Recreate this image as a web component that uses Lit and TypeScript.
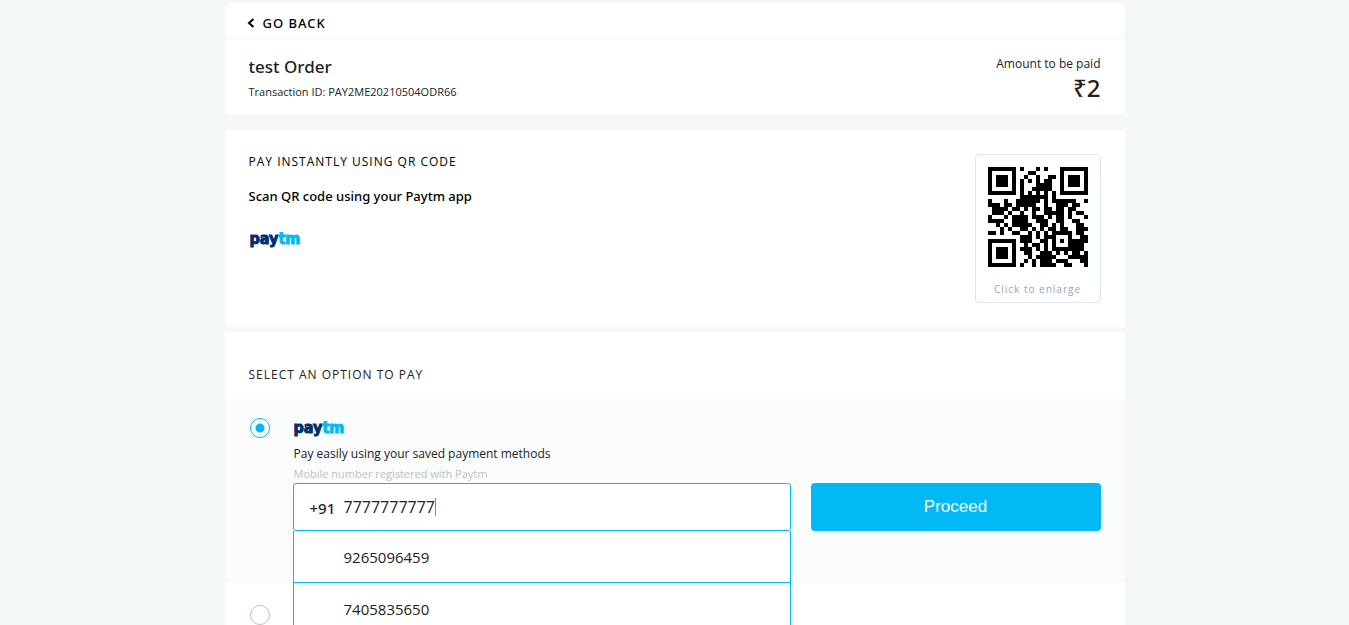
import { LitElement, html, css, svg } from "lit";
import { customElement, property, state } from "lit/decorators.js";

const QR_ROWS = [
  "#######.#...#.#...#######",
  "#.....#...##......#.....#",
  "#.###.#..#..#..##.#.###.#",
  "#.###.#.#.#.#.##..#.###.#",
  "#.###.#.#...####..#.###.#",
  "#.....#.#..#####..#.....#",
  "#######.#.#.#.#.#.#######",
  "........#######.#........",
  "#...#..######.#.######..#",
  "###.##.#####..#..###.##..",
  ".####.##.#.##.##.##.##...",
  ".###.#..#..#..#####.#.##.",
  "#...#.####.###.#.##.#...#",
  "####..####..###..##..##..",
  "..#.#.#####..##.#.#...##.",
  "...#.#..##.#.#.##.##..###",
  "##.#..##..#.#.#.#####.##.",
  "........###.#.###...#..##",
  "#######.###..##.#.#.#####",
  "#.....#..#.##.#.#...####.",
  "#.###.#.###.#.#.########.",
  "#.###.#..##..###.#.#.##.#",
  "#.###.#...#.#####...#####",
  "#.....#..#.#.###.###...##",
  "#######.#..#.####..##...#",
];

@customElement("qr-code")
class QrCode extends LitElement {
  static styles = css`
    :host { display: block; }
    .code { display: block; width: 100px; height: 100px; }
  `;
  render() {
    const d = QR_ROWS.map((row, y) =>
      [...row].map((c, x) => (c === "#" ? `M${x} ${y}h1v1h-1z` : "")).join("")
    ).join("");
    return html`<svg class="code" viewBox="0 0 25 25" shape-rendering="crispEdges" aria-hidden="true">
      ${svg`<path d=${d} fill="#000" />`}
    </svg>`;
  }
}

@customElement("paytm-logo")
class PaytmLogo extends LitElement {
  static styles = css`
    :host { display: block; }
    .logo {
      font: 700 16px/20px "DejaVu Sans Condensed", "DejaVu Sans", sans-serif;
      color: #002e6e;
      -webkit-text-stroke: 1px currentColor;
    }
    .light { color: #00b9f5; }
  `;
  render() {
    return html`<div class="logo">pay<span class="light">tm</span></div>`;
  }
}

@customElement("phone-field")
class PhoneField extends LitElement {
  @property() value = "7777777777";
  @property({ attribute: false }) suggestions = ["9265096459", "7405835650"];

  static styles = css`
    * { box-sizing: border-box; }
    :host { display: block; font-family: "Open Sans", "Noto Sans", sans-serif; color: #222; }
    .label { display: block; padding-left: 1px; font-size: 11px; line-height: 18px; color: #b8c2cb; }
    .wrap { position: relative; }
    .box {
      display: flex;
      align-items: center;
      height: 48px;
      padding: 0 16px;
      border: 1px solid #00b9f5;
      border-radius: 3px;
      background: #fff;
      cursor: text;
    }
    .prefix { width: 34px; font: 500 15px/22px "Noto Sans", sans-serif; padding-top: 2px; }
    .number {
      min-width: 1px;
      border: 0;
      outline: 0;
      padding: 0;
      background: none;
      color: inherit;
      caret-color: transparent;
      font: 400 16px/22px "Open Sans", "Noto Sans", sans-serif;
    }
    .caret { width: 1px; height: 18px; background: #00b9f5; }
    .menu {
      position: absolute;
      z-index: 1;
      top: 100%;
      left: 0;
      right: 0;
      margin: 0;
      padding: 0;
      list-style: none;
      border: 1px solid #00b9f5;
      border-top: 0;
      background: #fff;
    }
    .item + .item { border-top: 1px solid #00b9f5; }
    .choice {
      display: block;
      width: 100%;
      height: 51px;
      padding: 0 50px;
      border: 0;
      background: none;
      color: inherit;
      text-align: left;
      font: 400 15px/22px "Open Sans", "Noto Sans", sans-serif;
    }
  `;

  render() {
    return html`
      <label class="label" for="mobile">Mobile number registered with Paytm</label>
      <div class="wrap">
        <label class="box" for="mobile">
          <span class="prefix">+91</span>
          <input class="number" id="mobile" type="tel" autocomplete="off" .value=${this.value}
            style="width:${this.value.length}ch"
            @input=${(e: Event) => (this.value = (e.target as HTMLInputElement).value)} />
          <span class="caret"></span>
        </label>
        <ul class="menu">
          ${this.suggestions.map(
            (s) => html`<li class="item">
              <button class="choice" type="button" @click=${() => (this.value = s)}>${s}</button>
            </li>`
          )}
        </ul>
      </div>
    `;
  }
}

@customElement("app-root")
class AppRoot extends LitElement {
  @state() method = "paytm";

  static styles = css`
    * { box-sizing: border-box; }
    :host {
      display: block;
      min-height: 100vh;
      background: #f3f7f8;
      color: #222;
      font: 400 12px/18px "Open Sans", "Noto Sans", sans-serif;
    }
    .page { max-width: 900px; margin: 0 auto; padding-top: 3px; }
    .card { background: #fff; }
    .top { border-radius: 8px 8px 0 0; }
    .nav { display: flex; height: 36px; padding: 0 22px; align-items: center; border-bottom: 1px solid #f3f7f8; }
    .back {
      display: flex;
      align-items: center;
      gap: 8px;
      padding: 4px 0 0;
      border: 0;
      background: none;
      color: #000;
      font: 500 13px/18px "Noto Sans", sans-serif;
      letter-spacing: 1px;
    }
    .chevron { width: 8px; height: 10px; }
    .summary { display: flex; justify-content: space-between; padding: 16px 24px 11px; }
    .order { margin: 0 0 4px; font: 500 17px/24px "Noto Sans", sans-serif; }
    .txn { margin: 0; font-size: 11px; }
    .amount { text-align: right; }
    .value { font: 500 24px/30px "Noto Sans", sans-serif; }
    .qr { display: flex; justify-content: space-between; margin-top: 16px; padding: 24px; color: #000; }
    .heading { margin: 0; font-size: 12px; line-height: 16px; font-weight: 400; letter-spacing: 1px; }
    .scan { margin: 17px 0 24px; font: 500 13px/18px "Noto Sans", sans-serif; }
    .logo { padding-left: 1px; }
    .enlarge {
      display: flex;
      flex-direction: column;
      align-items: center;
      gap: 13px;
      width: 126px;
      height: 149px;
      padding: 12px 0 0;
      border: 1px solid #dde5ed;
      border-radius: 4px;
      background: #fff;
      color: #8ba6c1;
      font: 400 10px/18px "Open Sans", "Noto Sans", sans-serif;
      letter-spacing: 1px;
    }
    .options { margin-top: 5px; padding-top: 35px; }
    .options-title { padding: 0 24px 15px; }
    .option { display: grid; grid-template-columns: 44px 1fr; padding: 23px 24px 0; min-height: 184px; }
    .active { padding-top: 20px; background: #fafcfb; }
    .radio {
      appearance: none;
      width: 20px;
      height: 20px;
      margin: 0 1px;
      border: 1px solid #b8c2cb;
      border-radius: 50%;
      background: #fff;
    }
    .radio:checked {
      border-color: #00b9f5;
      background: radial-gradient(circle, #00b9f5 0 4px, #fff 5px);
    }
    .hint { margin: 7px 0 2px; padding-left: 1px; }
    .form { display: flex; align-items: flex-end; gap: 20px; }
    .phone { flex: 1; }
    .proceed {
      width: 290px;
      height: 48px;
      border: 0;
      border-radius: 4px;
      background: #00b9f5;
      color: #fff;
      font: 400 17px/20px "Liberation Sans", Arial, sans-serif;
    }
  `;

  private pick(id: string) {
    this.method = id;
  }

  render() {
    return html`
      <main class="page">
        <header class="card top">
          <nav class="nav">
            <button class="back" type="button">
              <svg class="chevron" viewBox="0 0 8 10" aria-hidden="true">
                <path d="M6.500 1 2 5l4.500 4" fill="none" stroke="#000" stroke-width="2" />
              </svg>
              GO BACK
            </button>
          </nav>
          <div class="summary">
            <div>
              <h1 class="order">test Order</h1>
              <p class="txn">Transaction ID: PAY2ME20210504ODR66</p>
            </div>
            <div class="amount">
              <div>Amount to be paid</div>
              <div class="value">₹2</div>
            </div>
          </div>
        </header>

        <section class="card qr">
          <div>
            <h2 class="heading">PAY INSTANTLY USING QR CODE</h2>
            <p class="scan">Scan QR code using your Paytm app</p>
            <paytm-logo class="logo"></paytm-logo>
          </div>
          <button class="enlarge" type="button">
            <qr-code></qr-code>
            Click to enlarge
          </button>
        </section>

        <section class="card options">
          <h2 class="heading options-title">SELECT AN OPTION TO PAY</h2>
          <div class="option active">
            <input class="radio" type="radio" name="method" aria-label="Paytm"
              .checked=${this.method === "paytm"} @change=${() => this.pick("paytm")} />
            <div>
              <paytm-logo class="logo"></paytm-logo>
              <p class="hint">Pay easily using your saved payment methods</p>
              <div class="form">
                <phone-field class="phone"></phone-field>
                <button class="proceed" type="button">Proceed</button>
              </div>
            </div>
          </div>
          <div class="option">
            <input class="radio" type="radio" name="method" aria-label="Other payment method"
              .checked=${this.method === "other"} @change=${() => this.pick("other")} />
          </div>
        </section>
      </main>
    `;
  }
}
